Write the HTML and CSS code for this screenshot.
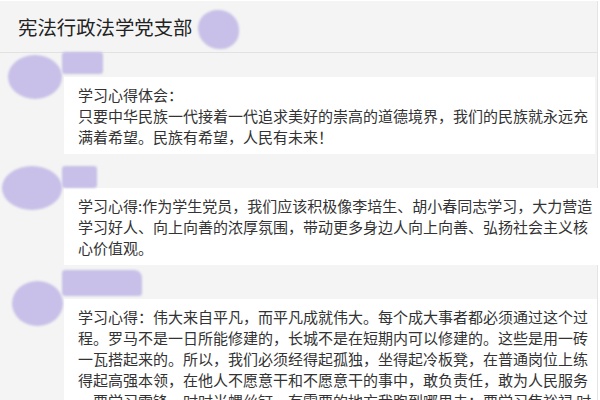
FILE: index.html
```html
<!DOCTYPE html>
<html lang="zh-CN">
<head>
  <meta charset="UTF-8">
  <meta name="viewport" content="width=device-width, initial-scale=1.0">
  <title>宪法行政法学党支部</title>
  <link rel="stylesheet" href="styles.css">
</head>
<body>
<div class="page">
  <div class="chat-header">
    <span class="chat-title">宪法行政法学党支部</span>
    <span class="blur blur-title"></span>
  </div>
  <div class="messages">
    <div class="msg">
      <div class="blur avatar"></div>
      <div class="msg-body">
        <div class="name-row"><span class="blur name name-s"></span></div>
        <div class="card">学习心得体会：<br>只要中华民族一代接着一代追求美好的崇高的道德境界，我们的民族就永远充<br>满着希望。民族有希望，人民有未来！</div>
      </div>
    </div>
    <div class="msg">
      <div class="blur avatar avatar-wide"></div>
      <div class="msg-body">
        <div class="name-row"><span class="blur name name-xs"></span></div>
        <div class="card">学习心得:作为学生党员，我们应该积极像李培生、胡小春同志学习，大力营造<br>学习好人、向上向善的浓厚氛围，带动更多身边人向上向善、弘扬社会主义核<br>心价值观。</div>
      </div>
    </div>
    <div class="msg">
      <div class="blur avatar avatar-low"></div>
      <div class="msg-body">
        <div class="name-row"><span class="blur name name-l"></span></div>
        <div class="card">学习心得：伟大来自平凡，而平凡成就伟大。每个成大事者都必须通过这个过<br>程。罗马不是一日所能修建的，长城不是在短期内可以修建的。这些是用一砖<br>一瓦搭起来的。所以，我们必须经得起孤独，坐得起冷板凳，在普通岗位上练<br>得起高强本领，在他人不愿意干和不愿意干的事中，敢负责任，敢为人民服务<br>、要学习雷锋，时时当螺丝钉，有需要的地方我跑到哪里去；要学习焦裕禄 时<br>时刻刻把群众放在心上，做一名合格的共产党员。</div>
      </div>
    </div>
  </div>
</div>
</body>
</html>
```

FILE: styles.css
```css
html, body { margin: 0; height: 100%; overflow: hidden; }
body { background: #fff; font-family: "Noto Sans CJK SC", "Noto Sans", sans-serif; color: #333; }
.page { width: 597px; height: 100%; margin-top: 1px; background: #f4f4f4; border-right: 1px solid #e4e4e4; }

.chat-header { height: 51px; display: flex; align-items: center; gap: 5px; padding-left: 18px; border-bottom: 1px solid #e2e2e2; }
.chat-title { font-size: 19.4px; color: #222; letter-spacing: 0; }

.blur { display: inline-block; background: #c8c0e8; filter: blur(1.2px); }
.blur-title { width: 41px; height: 39px; border-radius: 48% 52% 45% 55%; margin-top: 6px; }

.messages { padding-top: 2px; }
.msg { display: flex; margin-bottom: 12px; }
.avatar { flex: none; width: 54px; height: 44px; margin: 0 2px 0 8px; border-radius: 50%; }
.avatar-wide { width: 60px; margin-left: 2px; }
.avatar-low { width: 51px; height: 45px; margin: 4px 1px 0 12px; }

.msg-body { flex: 1; }
.name-row { height: 22px; }
.name { height: 20px; border-radius: 3px; margin-left: -2px; }
.name-xs { width: 35px; height: 22px; }
.name-s { width: 41px; margin-top: -4px; height: 22px; }
.name-l { width: 80px; height: 26px; margin-top: -8px; border-radius: 3px 8px 3px 3px; }

.card { background: #fff; margin-right: 2px; padding: 7px 6px 7px 14px; font-size: 15px; line-height: 21px; white-space: nowrap; }
```
